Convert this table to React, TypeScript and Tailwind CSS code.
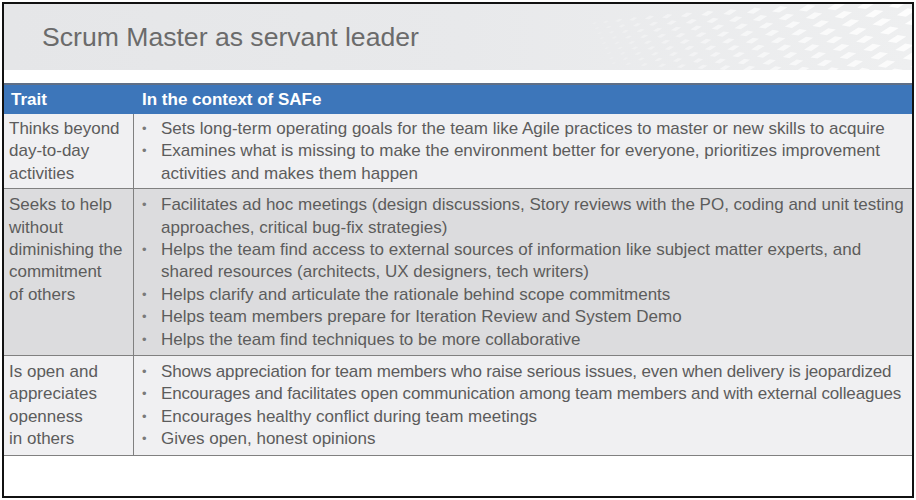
import React from "react";

type Line = { t: string; tight?: boolean };

const rows: { trait: string[]; items: Line[][]; bg: string; pad: string }[] = [
  {
    trait: ["Thinks beyond", "day-to-day", "activities"],
    items: [
      [{ t: "Sets long-term operating goals for the team like Agile practices to master or new skills to acquire" }],
      [
        { t: "Examines what is missing to make the environment better for everyone, prioritizes improvement" },
        { t: "activities and makes them happen" },
      ],
    ],
    bg: "bg-[#f0f0f2]",
    pad: "pt-[4px] pb-[3px]",
  },
  {
    trait: ["Seeks to help", "without", "diminishing the", "commitment", "of others"],
    items: [
      [
        { t: "Facilitates ad hoc meetings (design discussions, Story reviews with the PO, coding and unit testing" },
        { t: "approaches, critical bug-fix strategies)" },
      ],
      [
        { t: "Helps the team find access to external sources of information like subject matter experts, and" },
        { t: "shared resources (architects, UX designers, tech writers)" },
      ],
      [{ t: "Helps clarify and articulate the rationale behind scope commitments" }],
      [{ t: "Helps team members prepare for Iteration Review and System Demo" }],
      [{ t: "Helps the team find techniques to be more collaborative" }],
    ],
    bg: "bg-[#dcdcde]",
    pad: "pt-[5px] pb-[4px]",
  },
  {
    trait: ["Is open and", "appreciates", "openness", "in others"],
    items: [
      [{ t: "Shows appreciation for team members who raise serious issues, even when delivery is jeopardized", tight: true }],
      [{ t: "Encourages and facilitates open communication among team members and with external colleagues", tight: true }],
      [{ t: "Encourages healthy conflict during team meetings" }],
      [{ t: "Gives open, honest opinions" }],
    ],
    bg: "bg-[#f0f0f2]",
    pad: "pt-[5px] pb-[4px]",
  },
];

function Mesh() {
  const tiles: React.ReactNode[] = [];
  for (let r = 0; r < 9; r++) {
    for (let c = 0; c < 16; c++) {
      const t = c / 15;
      const size = 4 + t * 12;
      const x = 40 + c * (10 + t * 12) + r * 6 * (0.4 + t);
      const y = 4 + r * (5 + t * 4) - t * 10 + (1 - t) * 14;
      const op = 0.15 + t * 0.75;
      tiles.push(
        <polygon
          key={r + "-" + c}
          points={`${x},${y + size * 0.45} ${x + size * 0.7},${y} ${x + size * 1.3},${y + size * 0.1} ${x + size * 0.6},${y + size * 0.55}`}
          fill="#ffffff"
          opacity={op}
        />
      );
    }
  }
  return (
    <svg className="absolute right-0 top-0" width="360" height="66" viewBox="0 0 360 66">
      {tiles}
    </svg>
  );
}

export default function App() {
  return (
    <div className="w-[916px] h-[500px] bg-white p-[2px]" style={{ fontFamily: '"Liberation Sans", Arial, sans-serif' }}>
      <div className="w-[912px] h-[496px] border-2 border-[#111] flex flex-col overflow-hidden">
        <div className="relative h-[66px] bg-gradient-to-r from-[#e5e6e8] via-[#e8e9eb] to-[#eeeff0] overflow-hidden shrink-0">
          <Mesh />
          <div className="relative pl-[38px] pt-[16px] text-[26.6px] leading-[34px] text-[#6b6b6b]">
            Scrum Master as servant leader
          </div>
        </div>
        <div className="h-[13px] shrink-0" />
        <div className="flex h-[31px] bg-[#3d76ba] border-t-2 border-[#5f6f86] text-white font-bold text-[17px] items-center shrink-0">
          <div className="w-[130px] pl-[7px]">Trait</div>
          <div className="pl-[8px]">In the context of SAFe</div>
        </div>
        {rows.map((r, i) => (
          <div key={i} className={`flex ${r.bg} border-b border-[#808080] text-[#5c5c5c] text-[17px] leading-[22.4px]`}>
            <div className={`w-[130px] shrink-0 border-r border-[#808080] pl-[5px] ${r.pad}`}>
              {r.trait.map((t, k) => (
                <div key={k}>{t}</div>
              ))}
            </div>
            <div className={`pl-[8px] ${r.pad}`}>
              {r.items.map((lines, k) => (
                <div key={k} className="flex">
                  <span className="w-[19px] shrink-0 text-[#7a7a7a] text-[13px]">•</span>
                  <div>
                    {lines.map((l, m) => (
                      <div key={m} className={l.tight ? "whitespace-nowrap tracking-[-0.16px]" : "whitespace-nowrap"}>
                        {l.t}
                      </div>
                    ))}
                  </div>
                </div>
              ))}
            </div>
          </div>
        ))}
      </div>
    </div>
  );
}
